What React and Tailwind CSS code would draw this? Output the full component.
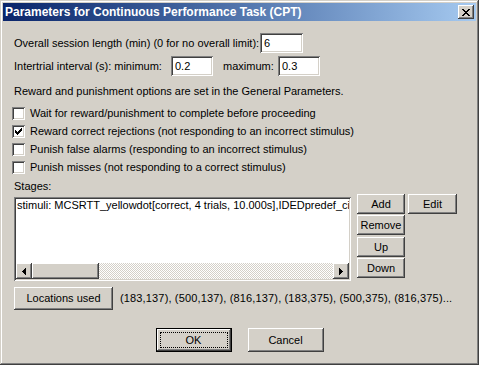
import React from "react";

const raised =
  "shadow-[inset_-1px_-1px_#404040,inset_1px_1px_#fff,inset_-2px_-2px_#808080,inset_2px_2px_#d4d0c8]";
const sunken =
  "shadow-[inset_1px_1px_#808080,inset_-1px_-1px_#fff,inset_2px_2px_#404040,inset_-2px_-2px_#d4d0c8]";

function Field({ value, w }) {
  return (
    <div className={`${w} h-[20px] bg-white ${sunken} flex items-center pl-[4px] shrink-0`}>
      {value}
    </div>
  );
}

function Check() {
  const px = [
    [6, 0, 1],
    [5, 1, 2],
    [0, 2, 1],
    [4, 2, 3],
    [0, 3, 2],
    [3, 3, 3],
    [0, 4, 5],
    [1, 5, 3],
    [2, 6, 1],
  ];
  return (
    <svg width="7" height="7" viewBox="0 0 7 7" shapeRendering="crispEdges">
      {px.map(([x, y, w], i) => (
        <rect key={i} x={x} y={y} width={w} height="1" fill="#000" />
      ))}
    </svg>
  );
}

function CheckRow({ checked, children }) {
  return (
    <div className="h-[18px] flex items-center">
      <span className={`w-[13px] h-[13px] bg-white ${sunken} flex items-center justify-center shrink-0 ml-[-2px]`}>
        {checked && <Check />}
      </span>
      <span className="ml-[5px]">{children}</span>
    </div>
  );
}

function Btn({ w, h = "h-[20px]", children, extra = "" }) {
  return (
    <div className={`${w} ${h} bg-[#d4d0c8] ${raised} flex items-center justify-center shrink-0 ${extra}`}>
      {children}
    </div>
  );
}

export default function App() {
  return (
    <div className="w-[479px] h-[365px] bg-[#d4d0c8] shadow-[inset_-1px_-1px_#404040,inset_1px_1px_#d4d0c8,inset_-2px_-2px_#808080,inset_2px_2px_#fff] p-[3px] flex flex-col text-[11px] leading-[13px] text-black font-['Liberation_Sans',Arial,sans-serif]">
      {/* Title bar */}
      <div className="h-[18px] bg-gradient-to-r from-[#0a246a] to-[#a6caf0] flex items-center pl-[2px] pr-[2px]">
        <span className="text-white font-bold text-[12px] flex-1">
          Parameters for Continuous Performance Task (CPT)
        </span>
        <div className={`w-[16px] h-[14px] bg-[#d4d0c8] ${raised} flex items-center justify-center`}>
          <svg width="8" height="7" viewBox="0 0 8 7" shapeRendering="crispEdges">
            <path d="M0 0h2v1h-2zM6 0h2v1h-2zM1 1h2v1h-2zM5 1h2v1h-2zM2 2h4v1h-4zM3 3h2v1h-2zM2 4h4v1h-4zM1 5h2v1h-2zM5 5h2v1h-2zM0 6h2v1h-2zM6 6h2v1h-2z" fill="#000" />
          </svg>
        </div>
      </div>

      {/* Content */}
      <div className="flex flex-col px-[11px]">
        <div className="mt-[12px] h-[20px] flex items-center">
          <span className="w-[246px] shrink-0 whitespace-nowrap">Overall session length (min) (0 for no overall limit):</span>
          <Field value="6" w="w-[43px]" />
        </div>
        <div className="mt-[3px] h-[20px] flex items-center">
          <span className="w-[157px] shrink-0 whitespace-nowrap">Intertrial interval (s): minimum:</span>
          <Field value="0.2" w="w-[42px]" />
          <span className="ml-[10px] w-[55px] shrink-0">maximum:</span>
          <Field value="0.3" w="w-[42px]" />
        </div>
        <div className="mt-[9px] h-[13px]">
          Reward and punishment options are set in the General Parameters.
        </div>
        <div className="mt-[6px] flex flex-col">
          <CheckRow>Wait for reward/punishment to complete before proceeding</CheckRow>
          <CheckRow checked>Reward correct rejections (not responding to an incorrect stimulus)</CheckRow>
          <CheckRow>Punish false alarms (responding to an incorrect stimulus)</CheckRow>
          <CheckRow>Punish misses (not responding to a correct stimulus)</CheckRow>
        </div>
        <div className="mt-[4px] h-[13px]">Stages:</div>

        <div className="mt-[1px] flex items-start">
          <div className={`mt-[3px] w-[337px] h-[84px] bg-white ${sunken} p-[2px] flex flex-col shrink-0`}>
            <div className="flex-1 overflow-hidden whitespace-nowrap pl-[1px]">
              stimuli: MCSRTT_yellowdot[correct, 4 trials, 10.000s],IDEDpredef_cir
            </div>
            <div className="h-[16px] flex bg-[repeating-conic-gradient(#d4d0c8_0_25%,#fff_0_50%)] bg-[length:2px_2px]">
              <Btn w="w-[16px]" h="h-[16px]">
                <svg width="4" height="7" viewBox="0 0 4 7" shapeRendering="crispEdges">
                  <path d="M3 0h1v7h-1zM2 1h1v5h-1zM1 2h1v3h-1zM0 3h1v1h-1z" fill="#000" />
                </svg>
              </Btn>
              <Btn w="w-[67px]" h="h-[16px]" />
              <div className="flex-1" />
              <Btn w="w-[16px]" h="h-[16px]">
                <svg width="4" height="7" viewBox="0 0 4 7" shapeRendering="crispEdges">
                  <path d="M0 0h1v7h-1zM1 1h1v5h-1zM2 2h1v3h-1zM3 3h1v1h-1z" fill="#000" />
                </svg>
              </Btn>
            </div>
          </div>
          <div className="ml-[6px] flex flex-col">
            <div className="flex">
              <Btn w="w-[48px]">Add</Btn>
              <Btn w="w-[49px]" extra="ml-[3px]">Edit</Btn>
            </div>
            <Btn w="w-[48px]" extra="mt-[1px]">Remove</Btn>
            <Btn w="w-[48px]" extra="mt-[2px]">Up</Btn>
            <Btn w="w-[48px]" extra="mt-[1px]">Down</Btn>
          </div>
        </div>

        <div className="mt-[6px] h-[23px] flex items-center">
          <Btn w="w-[99px]" h="h-[23px]">Locations used</Btn>
          <span className="ml-[7px] whitespace-nowrap tracking-[0.15px]">
            (183,137), (500,137), (816,137), (183,375), (500,375), (816,375)...
          </span>
        </div>

        <div className="mt-[18px] flex justify-center gap-[16px]">
          <div className="relative w-[76px] h-[24px] bg-[#d4d0c8] shadow-[inset_0_0_0_1px_#000,inset_-2px_-2px_#404040,inset_2px_2px_#fff,inset_-3px_-3px_#808080] flex items-center justify-center">
            <div className="absolute inset-[4px] border border-dotted border-black" />
            OK
          </div>
          <Btn w="w-[76px]" h="h-[24px]">Cancel</Btn>
        </div>
      </div>
    </div>
  );
}
